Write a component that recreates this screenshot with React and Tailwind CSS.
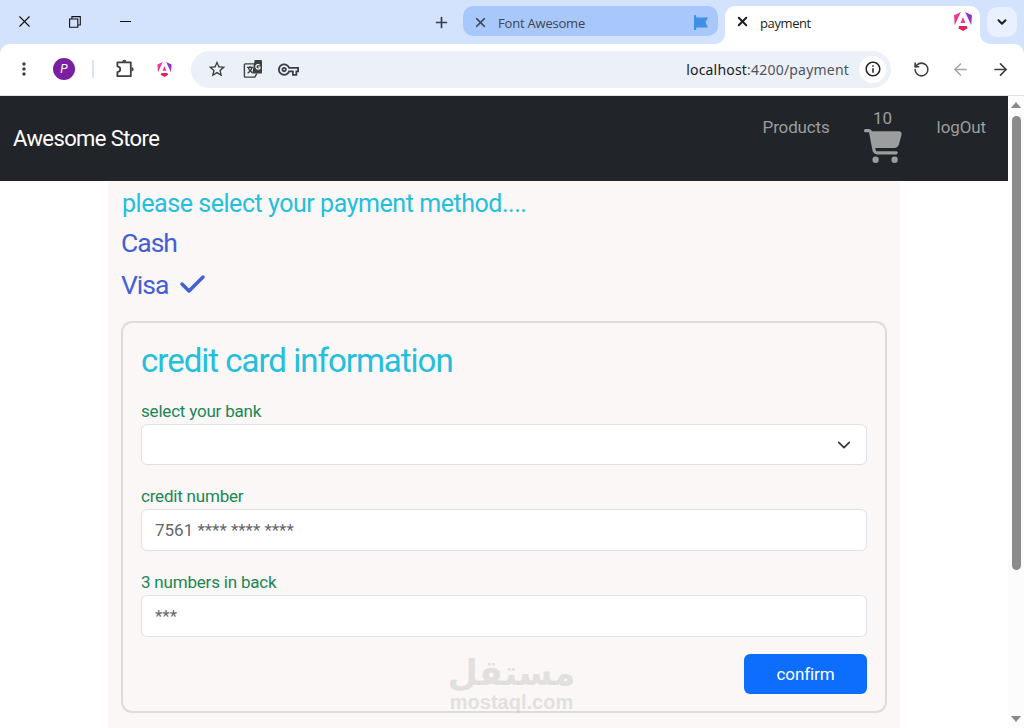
import React, { useState } from 'react'
import { X, Plus, ChevronDown, RotateCcw, ArrowLeft, ArrowRight } from 'lucide-react'
import { FaCartShopping, FaCheck } from 'react-icons/fa6'
import { MdMoreVert, MdStarBorder, MdOutlineVpnKey, MdInfoOutline } from 'react-icons/md'

const AngularLogo = ({ id, className }) => (
  <svg viewBox="0 0 223 236" className={className}>
    <defs>
      <linearGradient id={id} x1="0" y1="0.7" x2="1" y2="0.2">
        <stop offset="0" stopColor="#ee3a78" />
        <stop offset="0.5" stopColor="#e03bb0" />
        <stop offset="1" stopColor="#6a2be0" />
      </linearGradient>
    </defs>
    <path
      fill={`url(#${id})`}
      d="M222.077 39.192l-8.019 125.923L137.387 0l84.69 39.192zM111.039 62.675l30.357 73.803H80.681l30.358-73.803zM7.937 165.115L0 39.192 84.69 0 7.937 165.115z"
    />
    <path fill="#e02257" d="M168.972 202.017l-57.933 33.056-57.934-33.056 11.783-28.556h92.301l11.783 28.556z" />
  </svg>
)

const RestoreIcon = () => (
  <svg viewBox="0 0 12 12" className="h-3 w-3 shrink-0" fill="none" stroke="#111" strokeWidth="1.1">
    <path d="M.6 3h8.2v8.2H.6zM2.9 3V.6h8.4V9H8.8" />
  </svg>
)

const FlagIcon = () => (
  <svg viewBox="0 0 14 16" className="h-4 w-3.5 shrink-0" fill="#3f8fe5">
    <path d="M0 1.2a1.1 1.1 0 0 1 2.2 0v1.3H14l-2.6 4.8L14 12.4H2.2V15H0z" />
  </svg>
)

const PuzzleIcon = () => (
  <svg viewBox="0 0 20 20" className="h-5 w-5 shrink-0" fill="none" stroke="#3c4043" strokeWidth="1.8" strokeLinejoin="round">
    <path d="M2.4 3.4h13.4v13.8H2.4v-4c3.8-.6 3.8-5.2 0-5.8z" />
    <path d="M7.2 2.8a2.1 2.1 0 0 1 4.2 0zM16.6 8.2a2.1 2.1 0 0 1 0 4.2z" fill="#3c4043" stroke="none" />
  </svg>
)

const TranslateIcon = () => (
  <svg viewBox="0 0 20 20" className="h-5 w-5 shrink-0" fill="none">
    <path d="M11 4.9H2.2a.8.8 0 0 0-.8.8v11.6c0 .5.4.8.8.8h9.6l2-3.4" stroke="#3c4043" strokeWidth="1.4" />
    <path d="M11.7 1h6.1c.8 0 1.2.5 1.2 1.2v11.2c0 .8-.5 1.2-1.2 1.2H9.2z" fill="#3c4043" />
    <path d="M16.7 6.1a2.3 2.3 0 1 0 .2 3.2V8h-2" stroke="#fff" strokeWidth="1.2" />
    <path d="M4 8.4h6M7 7v1.4M9 8.4c-.5 2.5-2 4.4-4.4 5.8M5.4 9c.8 2.3 2.1 3.8 4 4.8" stroke="#3c4043" strokeWidth="1.3" />
  </svg>
)

const TabStrip = () => (
  <div className="flex h-11 items-start bg-[#d3e3fd] text-[13px]">
    <div className="flex h-[42px] w-[463px] items-center">
      <X className="ml-[15px] h-[19px] w-[19px] text-[#111]" strokeWidth={1.4} />
      <span className="ml-[35px] mt-px"><RestoreIcon /></span>
      <span className="ml-[39px] h-px w-[11px] bg-[#111]" />
      <Plus className="ml-[302px] mt-[3px] h-[17px] w-[17px] text-[#3a3f47]" strokeWidth={2.4} />
    </div>
    <div className="mt-1.5 flex h-[30px] w-[255px] items-center rounded-[10px] bg-[#a8c7fa] pl-2.5 pr-2.5 text-[#40464f]">
      <X className="mt-[2px] h-[15px] w-[15px]" strokeWidth={2.8} />
      <span className="ml-2.5 mt-[5px] whitespace-nowrap font-['Open_Sans','Noto_Sans',sans-serif] tracking-[-0.2px]">Font Awesome</span>
      <span className="ml-auto mt-[3px]"><FlagIcon /></span>
    </div>
    <svg viewBox="0 0 10 10" className="ml-[-3px] mt-[34px] h-2.5 w-2.5 shrink-0" fill="#fff"><path d="M10 0v10H0A10 10 0 0 0 10 0" /></svg>
    <div className="mt-1.5 flex h-[38px] w-[255px] shrink-0 items-start rounded-t-[10px] bg-white pl-2.5 pr-2 pt-[7px] text-[#1c1d20]">
      <X className="mt-px h-[15px] w-[15px]" strokeWidth={3} />
      <span className="ml-2.5 font-['Open_Sans','Noto_Sans',sans-serif] leading-[20px] tracking-[-0.4px]">payment</span>
      <AngularLogo id="tabLogo" className="-mt-px ml-auto h-[19px] w-[18px]" />
    </div>
    <svg viewBox="0 0 10 10" className="mt-[34px] h-2.5 w-2.5 shrink-0" fill="#fff"><path d="M0 0v10h10A10 10 0 0 1 0 0" /></svg>
    <div className="-ml-[3px] mt-[7px] flex h-[30px] w-[30px] shrink-0 items-center justify-center rounded-[10px] bg-[#e9f0fe]">
      <ChevronDown className="h-3.5 w-3.5 text-[#1f1f1f]" strokeWidth={3.4} />
    </div>
  </div>
)

const Toolbar = () => (
  <div className="bg-[#d3e3fd]">
    <div className="flex h-[52px] items-center rounded-t-[10px] border-b border-[#dfe3e1] bg-white pb-px text-[#3c4043]">
      <MdMoreVert className="ml-3.5 h-5 w-5" />
      <span className="ml-[19px] flex h-[22px] w-[22px] items-center justify-center rounded-full bg-[#7b1fa2] font-['Roboto',sans-serif] text-[12px] italic text-white">P</span>
      <span className="ml-[17px] h-[18px] w-0.5 rounded bg-[#d3e3fd]" />
      <span className="ml-[21px]"><PuzzleIcon /></span>
      <AngularLogo id="extLogo" className="ml-[22px] h-[15px] w-[15px]" />
      <div className="ml-[19px] flex h-[37px] w-[700px] items-center rounded-full bg-[#ebf0f9]">
        <MdStarBorder className="ml-4 h-5 w-5" />
        <span className="ml-4"><TranslateIcon /></span>
        <MdOutlineVpnKey className="ml-[15px] h-[21px] w-[21px]" />
        <span className="ml-auto font-['Noto_Sans',sans-serif] text-[14px] tracking-[0.2px] text-[#50545a]">
          <span className="text-[#202124]">localhost</span>:4200/payment
        </span>
        <span className="ml-[10px] mr-[5px] flex h-[27px] w-[27px] items-center justify-center rounded-full bg-white">
          <MdInfoOutline className="h-[18px] w-[18px] text-[#202124]" />
        </span>
      </div>
      <RotateCcw className="ml-[22px] h-[17px] w-[17px]" strokeWidth={2.2} />
      <ArrowLeft className="ml-[21px] h-[19px] w-[19px] text-[#a5a5a5]" strokeWidth={2} />
      <ArrowRight className="ml-[21px] h-[19px] w-[19px]" strokeWidth={2.1} />
    </div>
  </div>
)

const Navbar = ({ count }) => (
  <nav className="flex h-[85px] bg-[#212529] font-['Roboto',sans-serif]">
    <span className="ml-[13px] mt-[27px] text-[22px] leading-8 tracking-[-0.6px] text-white">Awesome Store</span>
    <div className="ml-auto mr-[22px] flex items-start text-[17px] text-[#9b9d9f]">
      <a className="mt-[19px] leading-6 tracking-[-0.15px]">Products</a>
      <a className="ml-[34px] flex w-[38px] flex-col items-center">
        <span className="mt-[11px] leading-[22px]">{count}</span>
        <FaCartShopping className="h-[34px] w-[38px]" />
      </a>
      <a className="ml-[35px] mt-[19px] leading-6 tracking-[-0.1px]">logOut</a>
    </div>
  </nav>
)

const Field = ({ label, value, select, className = '' }) => (
  <div className={className}>
    <label className="block h-6 text-[17px] leading-[22px] tracking-[-0.2px] text-[#198754]">{label}</label>
    <div className={`flex items-center rounded-md border border-[#dee2e6] bg-white px-[13px] text-[17px] text-[#62676c] ${select ? 'h-[41px]' : 'h-[42px]'}`}>
      <span className="mt-0.5">{value}</span>
      {select && (
        <svg viewBox="0 0 16 16" className="ml-auto mr-[2px] h-[14px] w-[14px]" fill="none" stroke="#343a40" strokeWidth="2" strokeLinecap="round" strokeLinejoin="round">
          <path d="m2 5 6 6 6-6" />
        </svg>
      )}
    </div>
  </div>
)

const Scrollbar = () => (
  <div className="flex w-4 flex-col items-center bg-[#fcfcfc]">
    <svg viewBox="0 0 12 7" className="mt-[6px] h-[6px] w-3" fill="#8b8b8b"><path d="M6 0l6 7H0z" /></svg>
    <span className="mt-2 h-[454px] w-[9px] rounded-full bg-[#8b8b8b]" />
    <svg viewBox="0 0 12 7" className="mb-[6px] mt-auto h-[6px] w-3" fill="#8b8b8b"><path d="M0 0h12L6 7z" /></svg>
  </div>
)

const App = () => {
  const [method, setMethod] = useState('Visa')

  return (
    <div className="relative h-[728px] w-[1024px] overflow-hidden bg-white">
      <TabStrip />
      <Toolbar />
      <div className="flex h-[632px]">
        <div className="w-[1008px] overflow-hidden">
          <Navbar count={10} />
          <main className="ml-[108px] h-[547px] w-[792px] bg-[#faf7f6] px-[13px] font-['Roboto',sans-serif]">
            <h2 className="h-[41px] pl-px pt-[3px] text-[25px] leading-[40px] tracking-[-0.45px] text-[#24bfdc]">please select your payment method....</h2>
            {['Cash', 'Visa'].map(name => (
              <button key={name} onClick={() => setMethod(name)} className="flex h-[42px] items-center text-[26.5px] tracking-[-1px] text-[#4260d3]">
                {name}
                {method === name && <FaCheck className="mb-[2px] ml-[12px] h-7 w-[25px]" />}
              </button>
            ))}

            {/* Card form */}
            <div className="mt-[15px] h-[392px] w-[766px] rounded-[11px] border-2 border-[#dedbdb] px-[18px]">
              <h1 className="h-[77px] pt-[14px] text-[33px] leading-[48px] tracking-[-1px] text-[#24bfdc]">credit card information</h1>
              <Field label="select your bank" select />
              <Field label="credit number" value="7561 **** **** ****" className="mt-5" />
              <Field label="3 numbers in back" value="***" className="mt-5" />
              <button className="ml-auto mt-[17px] block h-10 w-[123px] rounded-md bg-[#0d6efd] pt-px text-[17px] tracking-[-0.1px] text-white">confirm</button>
            </div>
          </main>
        </div>
        <Scrollbar />
      </div>

      {/* Watermark */}
      <div className="pointer-events-none absolute left-[449px] top-[654px] flex w-[125px] flex-col items-center text-[#c9c9c9]/50">
        <span dir="rtl" className="h-[38px] whitespace-nowrap font-['DejaVu_Sans',sans-serif] text-[35px] font-bold leading-[38px]">مستقل</span>
        <span className="font-['Liberation_Sans',sans-serif] text-[20px] font-bold leading-5">mostaql.com</span>
      </div>
    </div>
  )
}

export default App
